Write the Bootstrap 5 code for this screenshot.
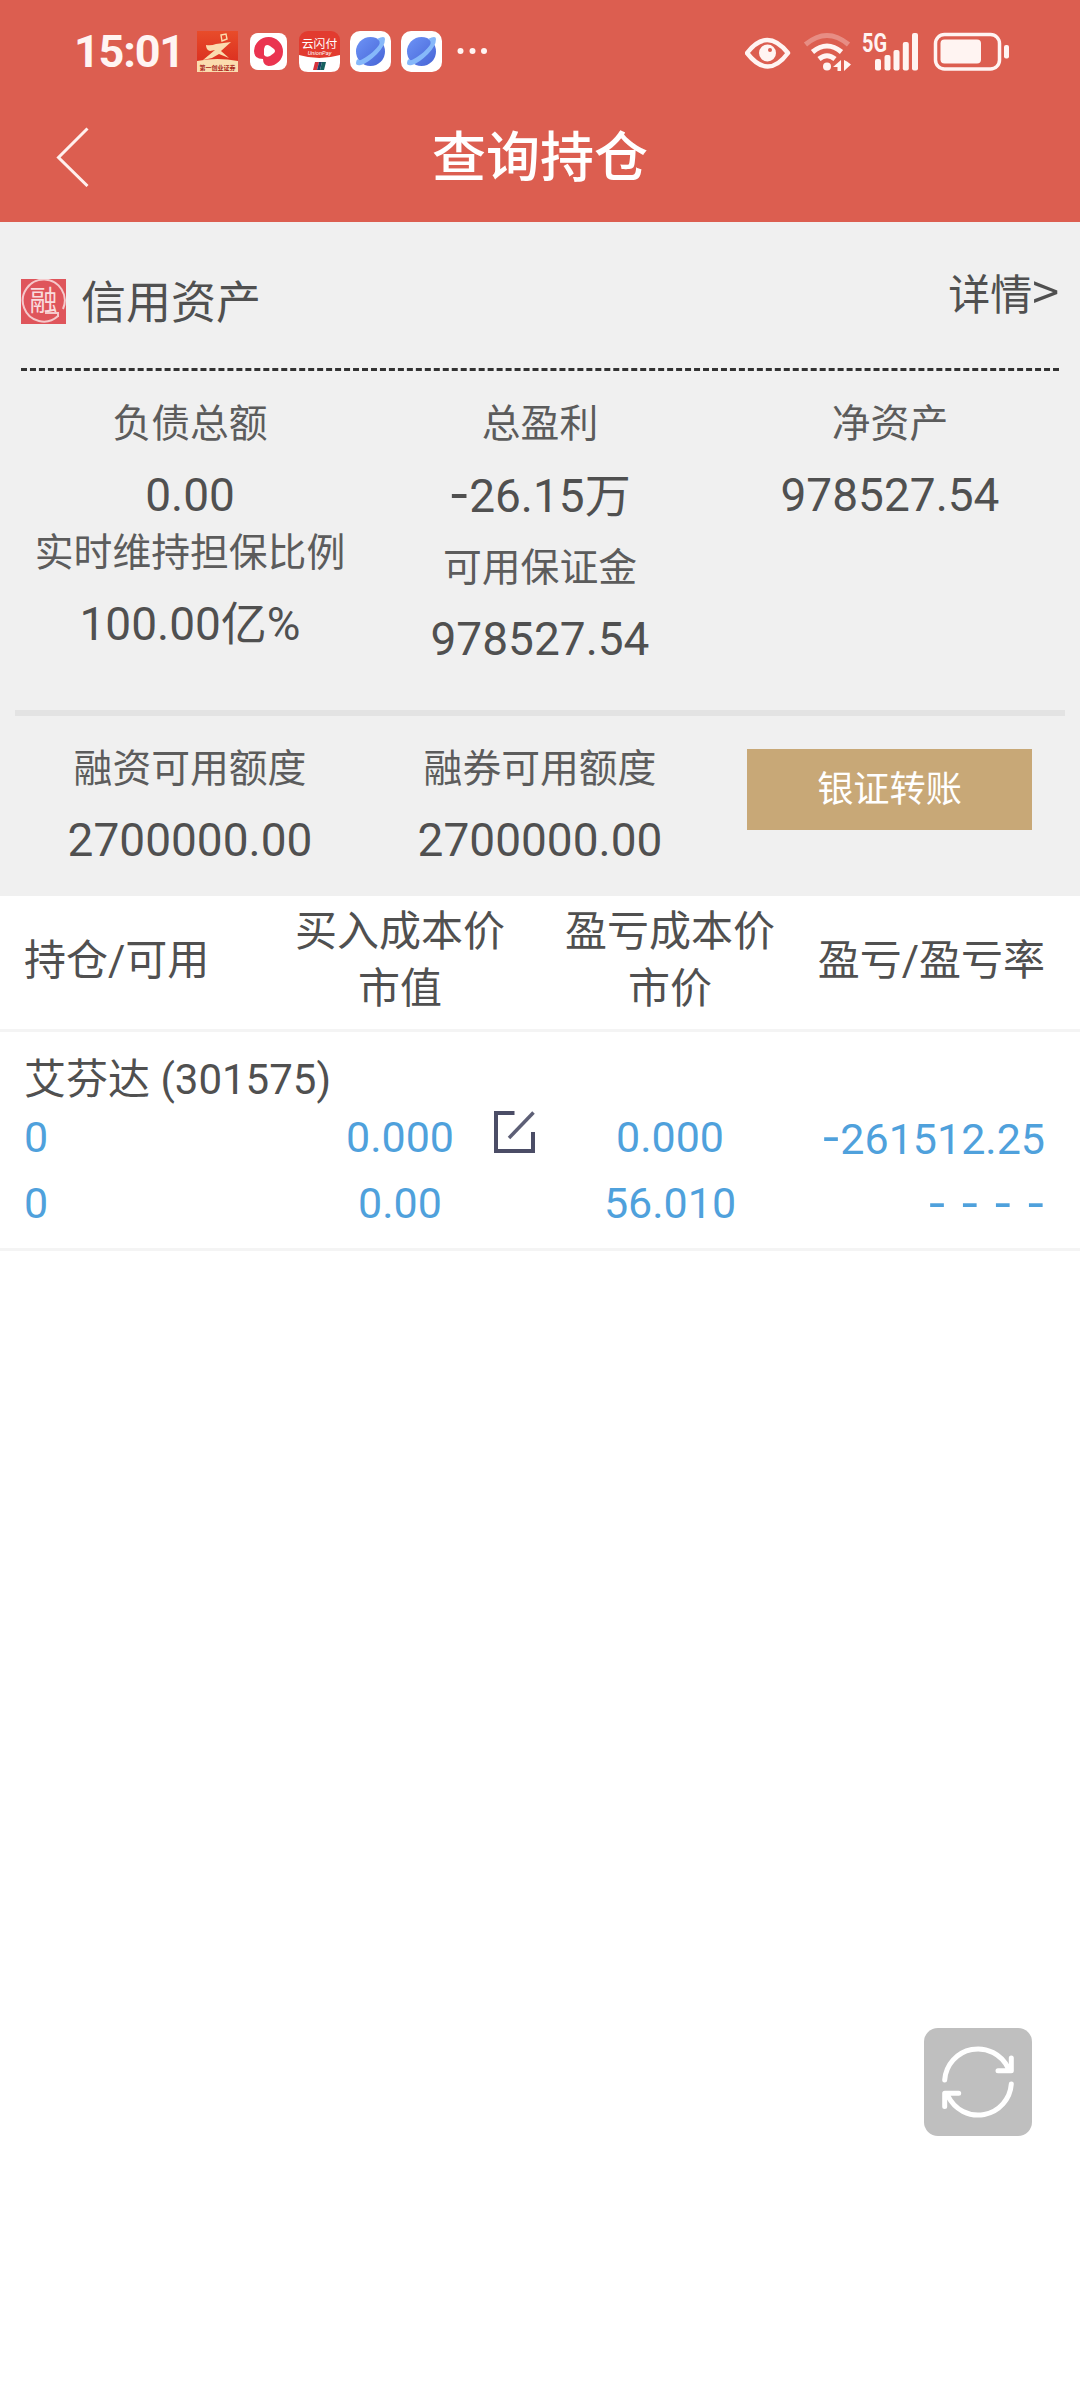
<!DOCTYPE html>
<html lang="zh-CN">
<head>
<meta charset="utf-8">
<meta name="viewport" content="width=device-width, initial-scale=1">
<title>查询持仓</title>
<link href="https://cdn.jsdelivr.net/npm/bootstrap@5.3.0/dist/css/bootstrap.min.css" rel="stylesheet">
<style>
  body { font-family: Roboto, "Noto Sans CJK SC", sans-serif; color: #505050; background: #fff; min-height: 2400px; }
  svg { display: block; flex: none; }
  .top-area { background: #dc5e50; height: 222px; color: #fff; }
  .status-bar { height: 103px; padding: 0 71px 0 74px; }
  .clock { font-size: 45px; font-weight: 700; line-height: 103px; width: 123px; letter-spacing: -1.2px; color: #fff4f2; }
  .title-bar { height: 107px; padding: 0 54px; }
  .title-bar h1 { font-size: 54px; font-weight: 500; line-height: 107px; padding-top: 4px; }
  .side { width: 36px; }
  .assets { background: #f0f0f0; height: 674px; }
  .assets-head { height: 149px; margin: 0 21px; border-bottom: 3px dashed #333; }
  .assets-name { font-size: 45px; line-height: 60px; padding-top: 49px; gap: 15px; }
  .assets-name span { padding-top: 3px; }
  .assets-name svg { margin-bottom: 3px; }
  .assets-more { font-size: 42px; line-height: 60px; padding-top: 43px; }
  .wide-sign { font-family: "Noto Sans CJK SC", sans-serif; line-height: 1; font-size: 1.24em; }
  .assets-more .wide-sign { font-size: 1.15em; }
  .figures { margin: 0 15px; }
  .figures-main { height: 345px; padding-top: 16px; border-bottom: 6px solid #e3e3e3; }
  .figures-quota { padding-top: 16px; }
  .fig-label { font-size: 38.8px; line-height: 72px; height: 72px; color: #5c5c5c; padding-top: 1px; }
  .fig-value { font-size: 46px; line-height: 72px; height: 72px; white-space: nowrap; }
  .fig-tight { margin-top: -15px; }
  .btn-transfer { width: 285px; height: 81px; margin: 17px 1px 0 0; font-size: 36.2px; line-height: 75px; padding: 0; border: 0; border-radius: 0; background: #c8a877; color: #fff; }
  .hold-grid { display: grid; grid-template-columns: 241px 270px 270px 240px; padding: 0 35px 0 24px; }
  .hold-head { height: 136px; padding-top: 7px; padding-bottom: 12px; font-size: 42px; line-height: 57px; border-bottom: 3px solid #f4f4f4; white-space: nowrap; }
  .hold-item { height: 219px; padding-top: 17px; border-bottom: 3px solid #f4f4f4; }
  .hold-name { font-size: 42px; line-height: 60px; height: 55px; padding: 1px 0 0 24px; }
  .hold-vals { font-size: 43px; line-height: 66px; color: #4fa1dc; grid-auto-rows: 66px; }
  .no-rate { word-spacing: 2.500px; }
  .spacer { width: 41px; }
  .refresh-btn { right: 48px; top: 2028px; width: 108px; height: 108px; border-radius: 14px; background: #bfbfbf; border: 0; padding: 0; }
</style>
</head>
<body>
<header class="top-area">
  <div class="status-bar d-flex align-items-center">
    <span class="clock">15:01</span>
    <svg width="41" height="41" viewBox="0 0 41 41">
      <defs><linearGradient id="g1" x1="0" y1="0" x2="0" y2="1"><stop offset="0" stop-color="#e84c2a"/><stop offset="1" stop-color="#d8271d"/></linearGradient></defs>
      <rect width="41" height="41" fill="url(#g1)"/>
      <path d="M0 30q20-4 41 0v11H0z" fill="#fbdcae"/>
      <path d="M24 4l5-1 1 5-5 2z" fill="none" stroke="#fbdcae" stroke-width="1.4"/>
      <path d="M9 14q5 1 10-1l15-2-10 9 8 7-10-4-7 4-9 2 12-10-5 1q-4-1-4-6z" fill="#fbdcae"/>
      <text x="20.500" y="38.500" font-size="6" font-weight="700" text-anchor="middle" fill="#a8281c">第一创业证券</text>
    </svg>
    <svg class="ms-2" width="45" height="41" viewBox="-4 0 45 41" style="margin-right:8px">
      <rect y="2" width="37" height="37" rx="8" fill="#fff"/>
      <path d="M4 20A14.500 14.500 0 1 1 18.500 35Q13 34 13 28Q4 28 4 20z" fill="#ea3450"/>
      <path d="M15 15q2-2 5 0l4 3q2 2 0 4l-4 3q-4 2-6-1v-6z" fill="#fff"/>
    </svg>
    <svg width="41" height="41" viewBox="0 0 41 41">
      <rect width="41" height="41" rx="9" fill="#e23b2f"/>
      <path d="M0 24q20 6 41 0v8q0 9-9 9H9q-9 0-9-9z" fill="#fff"/>
      <text x="20.500" y="17" font-size="11.800" text-anchor="middle" fill="#fff">云闪付</text>
      <text x="20.500" y="24" font-size="5.800" font-style="italic" text-anchor="middle" fill="#fff">UnionPay</text>
      <path d="M16 31h4l-2 8h-4z" fill="#d8323c"/><path d="M20 31h3l-2 8h-3z" fill="#1c3f66"/><path d="M23 31h4l-2 8h-4z" fill="#16615f"/>
    </svg>
    <svg width="41" height="41" viewBox="0 0 41 41" style="margin-left:10px">
      <defs><linearGradient id="g2" x1="0" y1="0" x2="1" y2="1"><stop offset="0" stop-color="#6d93f6"/><stop offset="1" stop-color="#4664d6"/></linearGradient></defs>
      <rect width="41" height="41" rx="10" fill="#fff"/>
      <circle cx="20.500" cy="20.500" r="14.500" fill="url(#g2)"/>
      <path d="M27 8q8-4 8 0 0 7-8 15-9 9-16 11-5 1-5-2 0-3 2-4 1 3 8-2 8-5 13-12 2-4-2-6z" fill="#86b8fa"/>
    </svg>
    <svg width="41" height="41" viewBox="0 0 41 41" style="margin-left:10px">
      <rect width="41" height="41" rx="10" fill="#fff"/>
      <circle cx="20.500" cy="20.500" r="14.500" fill="url(#g2)"/>
      <path d="M27 8q8-4 8 0 0 7-8 15-9 9-16 11-5 1-5-2 0-3 2-4 1 3 8-2 8-5 13-12 2-4-2-6z" fill="#86b8fa"/>
    </svg>
    <svg width="32" height="8" viewBox="0 0 32 8" fill="#fff4f2" style="margin-left:14px">
      <circle cx="4.500" cy="3" r="3"/><circle cx="16.500" cy="3" r="3"/><circle cx="28" cy="3" r="3"/>
    </svg>
    <svg class="ms-auto" width="264" height="60" viewBox="745 21 264 60" fill="#fff4f2">
      <path d="M747 52q20-26 41 0-20 27-41 0z" fill="none" stroke="#fff4f2" stroke-width="4.500" stroke-linejoin="round"/>
      <circle cx="767.500" cy="52" r="8.500"/><circle cx="770" cy="49" r="2" fill="#dc5e50"/>
      <g fill="none" stroke="#fff4f2" stroke-width="5">
        <path d="M805.500 43.500q21.500-18 43 0" opacity=".32"/>
        <path d="M812.500 51q14.500-12 29 0"/>
        <path d="M819 58q8-6.500 16 0"/>
      </g>
      <circle cx="827" cy="65.500" r="4"/>
      <path d="M841 59v11h-3.500v-4h-4.500zM844 59v11l7-6.500-4-3z"/>
      <text x="862" y="50.500" font-size="25" font-weight="700" textLength="25" lengthAdjust="spacingAndGlyphs">5G</text>
      <rect x="875" y="58" width="6" height="11.500" rx="2"/><rect x="884.500" y="54" width="6" height="15.500" rx="2"/><rect x="893.500" y="49" width="6" height="20.500" rx="2"/><rect x="902.800" y="41" width="6" height="28.500" rx="2"/><rect x="912" y="32" width="6" height="37.500" rx="2"/>
      <rect x="935.500" y="33.500" width="64" height="34.500" rx="9" fill="none" stroke="#fff4f2" stroke-width="3.500"/>
      <rect x="940.500" y="38.500" width="40.500" height="24" rx="4"/>
      <rect x="1004" y="44" width="5" height="13.500" rx="2"/>
    </svg>
  </div>
  <div class="title-bar d-flex justify-content-between align-items-center">
    <svg class="side" width="36" height="60" viewBox="0 0 36 60"><path d="M33.500 1.500L4.500 30.500 33.500 59" fill="none" stroke="#fff0ee" stroke-width="3"/></svg>
    <h1 class="m-0">查询持仓</h1>
    <span class="side"></span>
  </div>
</header>

<section class="assets">
  <div class="assets-head d-flex justify-content-between align-items-start">
    <div class="assets-name d-flex align-items-center">
      <svg width="45" height="45" viewBox="0 0 45 45">
        <rect width="45" height="45" fill="#df555b"/>
        <path d="M37 37A21 21 0 1 1 42 30" fill="none" stroke="#f5c9cb" stroke-width="2"/>
        <text x="22.500" y="32" font-size="28" text-anchor="middle" fill="#f9dcdd">融</text>
        <path d="M24 34h13v4" fill="none" stroke="#f5c9cb" stroke-width="2"/>
      </svg>
      <span>信用资产</span>
    </div>
    <span class="assets-more">详情<span class="wide-sign">&gt;</span></span>
  </div>
  <div class="figures figures-main row g-0 text-center">
    <div class="col-4">
      <div class="fig-label">负债总额</div><div class="fig-value">0.00</div>
      <div class="fig-label fig-tight">实时维持担保比例</div><div class="fig-value">100.00亿%</div>
    </div>
    <div class="col-4">
      <div class="fig-label">总盈利</div><div class="fig-value"><span class="wide-sign">-</span>26.15万</div>
      <div class="fig-label">可用保证金</div><div class="fig-value">978527.54</div>
    </div>
    <div class="col-4">
      <div class="fig-label">净资产</div><div class="fig-value">978527.54</div>
    </div>
  </div>
  <div class="figures figures-quota row g-0 text-center">
    <div class="col-4"><div class="fig-label">融资可用额度</div><div class="fig-value">2700000.00</div></div>
    <div class="col-4"><div class="fig-label">融券可用额度</div><div class="fig-value">2700000.00</div></div>
    <div class="col-4"><button type="button" class="btn btn-transfer">银证转账</button></div>
  </div>
</section>

<main>
  <div class="hold-grid hold-head align-items-center">
    <div>持仓/可用</div>
    <div class="text-center">买入成本价<br>市值</div>
    <div class="text-center">盈亏成本价<br>市价</div>
    <div class="d-flex justify-content-end">盈亏/盈亏率</div>
  </div>
  <div class="hold-item">
    <div class="hold-name">艾芬达 (301575)</div>
    <div class="hold-grid hold-vals">
      <div>0</div>
      <div class="d-flex align-items-center"><span class="spacer"></span><span class="flex-fill text-center">0.000</span>
        <svg width="41" height="42" viewBox="0 0 41 42" style="margin-bottom:11px"><path d="M20.500 2H2v38h37V21" fill="none" stroke="#4b4d66" stroke-width="4"/><path d="M39.500 1.500L15 27" fill="none" stroke="#5d5f76" stroke-width="3.500"/></svg>
      </div>
      <div class="text-center">0.000</div>
      <div class="text-end text-nowrap"><span class="wide-sign">-</span>261512.25</div>
      <div>0</div>
      <div class="text-center">0.00</div>
      <div class="text-center">56.010</div>
      <div class="text-end"><span class="wide-sign no-rate">- - - -</span></div>
    </div>
  </div>
</main>

<button type="button" class="refresh-btn position-absolute" aria-label="刷新">
  <svg width="108" height="108" viewBox="0 0 108 108" fill="none" stroke="#fff" stroke-width="5" stroke-linecap="round" stroke-linejoin="round">
    <path d="M20.700 52A33.300 33.300 0 0 1 84 40M87.300 30v12.700H74"/>
    <path d="M87.300 56A33.300 33.300 0 0 1 24 68M20.700 78.500V65.300H34.700"/>
  </svg>
</button>
<script src="https://cdn.jsdelivr.net/npm/bootstrap@5.3.0/dist/js/bootstrap.bundle.min.js"></script>
</body>
</html>
